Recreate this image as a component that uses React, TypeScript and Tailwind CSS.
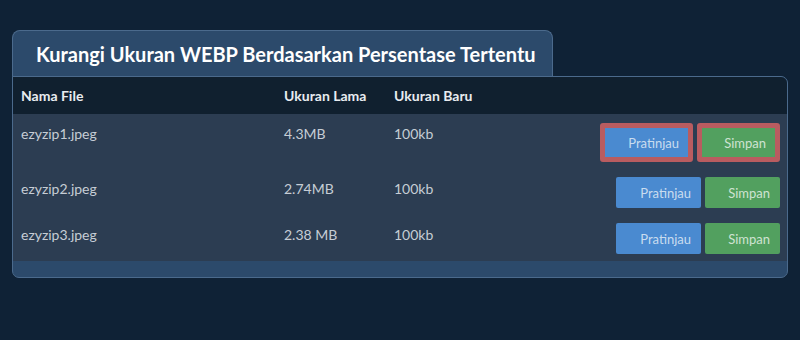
const rows = [
  { name: 'ezyzip1.jpeg', oldSize: '4.3MB', newSize: '100kb', active: true },
  { name: 'ezyzip2.jpeg', oldSize: '2.74MB', newSize: '100kb', active: false },
  { name: 'ezyzip3.jpeg', oldSize: '2.38 MB', newSize: '100kb', active: false },
];

const Actions = ({ active }: { active: boolean }) =>
  active ? (
    <div className="flex gap-[4px]">
      <button className="w-[93px] h-[39px] border-[5px] border-[#b95c60] rounded-[3px] bg-[#4a8ad0] text-right pr-[9px] text-[13px] text-[#c9dcef]">
        Pratinjau
      </button>
      <button className="w-[83px] h-[39px] border-[5px] border-[#b95c60] rounded-[3px] bg-[#52a05f] text-right pr-[9px] text-[13px] text-[#cfe3d2]">
        Simpan
      </button>
    </div>
  ) : (
    <div className="flex gap-[4px]">
      <button className="w-[85px] h-[31px] rounded-[2px] bg-[#4a8ad0] text-right pr-[10px] text-[13px] text-[#c9dcef]">
        Pratinjau
      </button>
      <button className="w-[75px] h-[31px] rounded-[2px] bg-[#52a05f] text-right pr-[10px] text-[13px] text-[#cfe3d2]">
        Simpan
      </button>
    </div>
  );

export default function App() {
  return (
    <div className="w-[800px] h-[340px] bg-[#0f2236] pt-[30px] font-['Lato',sans-serif]">
      {/* Title tab */}
      <div className="ml-[12px] w-[541px] h-[47px] bg-[#2c4a6b] border border-b-0 border-[#4b6a8c] rounded-t-[8px] pl-[23px] flex items-center">
        <h1 className="text-[20px] font-bold text-white leading-none">
          Kurangi Ukuran WEBP Berdasarkan Persentase Tertentu
        </h1>
      </div>

      {/* Table card */}
      <div className="ml-[12px] w-[776px] -mt-px bg-[#2c4a6b] border border-[#4b6a8c] rounded-[7px] rounded-tl-none overflow-hidden pb-[16px]">
        <div className="grid grid-cols-[263px_110px_1fr_auto] h-[37px] items-center bg-[#10202f] text-[14px] font-bold text-[#e8ecf0]">
          <div className="pl-[8px]">Nama File</div>
          <div className="pl-[8px]">Ukuran Lama</div>
          <div className="pl-[8px]">Ukuran Baru</div>
          <div />
        </div>
        {rows.map((r) => (
          <div
            key={r.name}
            className="grid grid-cols-[263px_110px_1fr_auto] bg-[#2c3d52] text-[14px] text-[#c6cdd5] leading-[16px]"
          >
            <div className="pl-[8px] pt-[12px]">{r.name}</div>
            <div className="pl-[8px] pt-[12px]">{r.oldSize}</div>
            <div className="pl-[8px] pt-[12px]">{r.newSize}</div>
            <div className={`pr-[7px] ${r.active ? 'pt-[9px]' : 'pt-[8px]'} pb-[7px]`}>
              <Actions active={r.active} />
            </div>
          </div>
        ))}
      </div>
    </div>
  );
}
